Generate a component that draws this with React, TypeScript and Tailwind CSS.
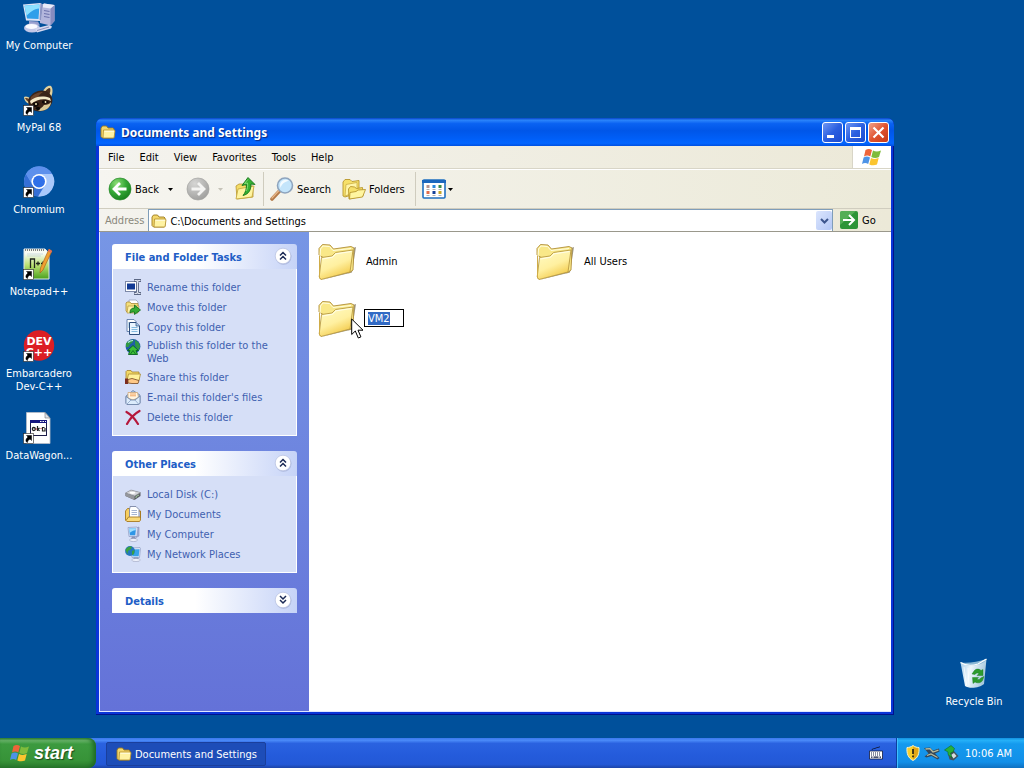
import React, { useEffect, useRef, useState } from 'react';

interface IconProps {
  className?: string;
}

const ShortcutArrow = () => (
  <g>
    <rect x="0.5" y="21.5" width="10" height="10" fill="#fff" stroke="#222" strokeWidth="0.6" />
    <path d="M3.500 23.500h5v5L7 27C5.500 28 4.500 29 4.500 30.500L3 29.500c-.4-2 .4-3 2-4.500z" fill="#000" stroke="#000" strokeWidth="0.500" />
  </g>
);

const ComputerIcon: React.FC<IconProps> = ({ className }) => (
  <svg viewBox="0 0 32 32" className={className}>
    <path d="M17 5l4-3.500L31.500 3v16l-4 4.500L17 21z" fill="#b4b7dd" />
    <path d="M27.500 6.500l4-3.500v16l-4 4.500z" fill="#868cc0" />
    <path d="M17 5l4-3.500L31.500 3l-4 3.500z" fill="#e9ebf9" />
    <path d="M21 8.500l5.500 1M21 11.500l5.500 1M21 14.500l5.500 1" stroke="#6d73ad" strokeWidth="1.100" />
    <path d="M0 2.500L17.500 1 20 3 18 19 3 18.500z" fill="#dfe4f6" />
    <path d="M17.500 1L20 3 18 19l-1.500-1.500z" fill="#8c95c4" />
    <path d="M1.500 3.800L16.500 2.500 15.500 17 4 16.500z" fill="#2f9fea" />
    <path d="M1.500 3.800L16.500 2.500l-.3 4C11 7 7 10 3.500 14z" fill="#8ce0ff" />
    <path d="M6 19l9 .5 2 4H6z" fill="#989fce" />
    <ellipse cx="9" cy="26" rx="8" ry="4.500" fill="#c3c8e8" />
    <ellipse cx="8.500" cy="24.600" rx="6" ry="2.500" fill="#f9faff" />
    <path d="M12 26.500l14-3.500 3 1.500-1 2-14 4z" fill="#d5d9f0" />
    <path d="M14 28.500l12-3.500" stroke="#8187b8" strokeWidth="0.900" />
  </svg>
);

const RaccoonIcon: React.FC<IconProps> = ({ className }) => (
  <svg viewBox="0 0 32 32" className={className}>
    <path d="M20 8c1-4 5-7 8-6 2 2 2 7 0 11z" fill="#e4d29c" />
    <path d="M22 8c1-2 3-4 5-4 1 2 0 5-1 7z" fill="#4a3020" />
    <path d="M8 15C5 12 2 12 1 13c0 3 2 6 6 7z" fill="#e4d29c" />
    <path d="M7 16c-2-2-3-2-5-2 1 2 2 3 4 4z" fill="#6a4328" />
    <path d="M6 14c4-6 10-9 17-7 6 3 8 9 5 14-4 6-12 8-18 5-4-3-6-7-4-12z" fill="#3a2418" />
    <path d="M8 13c4-4 9-5 12-5-3 2-5 4-7 7l-6 4z" fill="#6b452c" />
    <path d="M7 17c4-4 12-6 20-3l1 3c-6-3-14-2-20 3z" fill="#f4e9c8" />
    <path d="M12 25c4 1 7-1 9-4 3 0 6-1 7-3 0 5-5 9-11 9z" fill="#dccb98" />
    <path d="M10 19c3-2 5-1 6 1-1 3-4 4-6 2zM19 17c3-1 6 0 7 1-2 2-5 2-7 1z" fill="#120a08" />
    <circle cx="13" cy="20" r="1" fill="#f5e9b8" />
    <circle cx="22.500" cy="18" r="0.900" fill="#f5e9b8" />
    <ellipse cx="15" cy="24.500" rx="2.200" ry="1.700" fill="#090707" />
    <ShortcutArrow />
  </svg>
);

const ChromiumIcon: React.FC<IconProps> = ({ className }) => (
  <svg viewBox="0 0 32 32" className={className}>
    <circle cx="16" cy="15.500" r="15" fill="#6fa0f0" />
    <path d="M16 8h13.200A15 15 0 0 1 15 30.500L22.500 19z" fill="#a9c8fb" />
    <path d="M3 8a15 15 0 0 0 12 22.500l6-10.500-11.500-1z" fill="#356fd6" />
    <path d="M3 8A15 15 0 0 1 29.200 8H16l-7 9z" fill="#5d90ec" />
    <circle cx="16" cy="15.500" r="7.600" fill="#fff" />
    <circle cx="16" cy="15.500" r="6" fill="#2f6fe8" />
    <ShortcutArrow />
  </svg>
);

const NotepadIcon: React.FC<IconProps> = ({ className }) => (
  <svg viewBox="0 0 32 32" className={className}>
    <defs>
      <linearGradient id="npp" x1="0" y1="0" x2="0" y2="1">
        <stop offset="0.15" stopColor="#f7fbf2" />
        <stop offset="0.550" stopColor="#b9e070" />
        <stop offset="1" stopColor="#49a01c" />
      </linearGradient>
    </defs>
    <path d="M1 1h21l4 4v26H1z" fill="url(#npp)" stroke="#dfe6e8" strokeWidth="1" />
    <path d="M2 2h20" stroke="#5a5a5a" strokeWidth="1.500" strokeDasharray="1 1" />
    <path d="M4 6h16M4 8h14" stroke="#b6cbd4" strokeWidth="0.600" />
    <path d="M7.500 20v-9h4v9M13 15.500h4M15 13.500v4M18 15.500h4M20 13.500v4" stroke="#20261c" strokeWidth="1.300" fill="none" />
    <path d="M26 1l3 2-9 19-3 3 .5-5z" fill="#f0a030" stroke="#a35c17" strokeWidth="0.600" />
    <path d="M26 1l3 2-1 2-3-2z" fill="#e36c62" />
    <ShortcutArrow />
  </svg>
);

const DevIcon: React.FC<IconProps> = ({ className }) => (
  <svg viewBox="0 0 32 32" className={className}>
    <circle cx="16" cy="15.500" r="15.200" fill="#dc1e24" />
    <text x="16" y="15" textAnchor="middle" fontSize="11" fontWeight="700" fontFamily="DejaVu Sans" fill="#fff">DEV</text>
    <text x="16" y="26" textAnchor="middle" fontSize="11" fontWeight="700" fontFamily="DejaVu Sans" fill="#fff">C++</text>
    <ShortcutArrow />
  </svg>
);

const BatchIcon: React.FC<IconProps> = ({ className }) => (
  <svg viewBox="0 0 32 32" className={className}>
    <path d="M3.500.5H22l5 5.500v25.500H3.500z" fill="#fff" stroke="#b9bec8" strokeWidth="0.800" />
    <path d="M22 .5V6h5z" fill="#dfe3ea" stroke="#777" strokeWidth="0.600" />
    <rect x="7.500" y="8.500" width="16" height="15" fill="#fff" stroke="#1c1c48" />
    <path d="M7 8h17v3H7z" fill="#15157f" />
    <path d="M17 9.500h1.500M19.500 9.500H21M22 9.500h1" stroke="#fff" />
    <circle cx="10.800" cy="17" r="1.500" fill="none" stroke="#222" strokeWidth="1.300" />
    <path d="M14.500 14v5M14.500 17.500l2-1.500M15 17l1.500 2M21.500 15.500h-2v3.500h2.500v-3" stroke="#222" strokeWidth="1.200" fill="none" />
    <path d="M12.500 17h1.500M17.500 16.500h1" stroke="#b23" />
    <ShortcutArrow />
  </svg>
);

const RecycleIcon: React.FC<IconProps> = ({ className }) => (
  <svg viewBox="0 0 32 32" className={className}>
    <defs>
      <linearGradient id="bin" x1="0" y1="0" x2="1" y2="0.300">
        <stop offset="0" stopColor="#a6cdea" />
        <stop offset="0.450" stopColor="#eef7fc" />
        <stop offset="1" stopColor="#a8c9de" />
      </linearGradient>
    </defs>
    <path d="M2.500 4.500C8 6 15 6 20 4.500L28.500 1 26 26c-4 4-15 5-19 2z" fill="url(#bin)" />
    <path d="M2.500 4.500C10 5.500 20 4 28.500 1c-2 4-7 6-13 6.500S5 7 2.500 4.500z" fill="#8ab8d6" />
    <path d="M2.500 4.500C8 8 15 7.500 20 6L28.500 1" fill="none" stroke="#fff" strokeWidth="1.200" />
    <path d="M6 9l2.500 18M10 10l1 18" stroke="#fff" strokeWidth="1" opacity="0.700" />
    <path d="M14 16l2-3c2-2.500 5-2.500 7-.500l2-1v6h-6l2-2c-1.500-1-3-.500-4 1zM26 18.500l-1.500 4c-1.500 2.500-5 3-7.500 1.500l-2 1.500-.5-6h6l-1.500 1.800c1.500.700 3 .200 3.700-1.300z" fill="#2c9a2d" stroke="#15781c" strokeWidth="0.400" />
  </svg>
);

const SmallFolder: React.FC<IconProps> = ({ className }) => (
  <svg viewBox="0 0 16 16" className={className}>
    <path d="M1 4L2.500 2h4L8 4h5l1 1v8l-1 1H2.500L1 12.500z" fill="#f3d76c" stroke="#9d7a1d" strokeWidth="0.900" />
    <path d="M3.500 6h11l.500 1-1 7H3z" fill="#fff3a3" stroke="#b28e2c" strokeWidth="0.800" />
    <path d="M4.500 7.300h9.500" stroke="#fffce0" strokeWidth="1" />
  </svg>
);

const BigFolder: React.FC<IconProps> = ({ className }) => (
  <svg viewBox="0 0 38 38" className={className}>
    <defs>
      <linearGradient id="bigFolder" x1="0" y1="0" x2="0.500" y2="1">
        <stop offset="0" stopColor="#fffcc8" />
        <stop offset="0.600" stopColor="#fff0a0" />
        <stop offset="1" stopColor="#f3cb4c" />
      </linearGradient>
    </defs>
    <path d="M3 37l31-7.500 4-25.500-3 1-3 23z" fill="#6d6247" opacity="0.650" />
    <path d="M1 12V5.500L4.500 1.500 12 2l3.500 4L33 3.500l3 1.500-1 22-4 3z" fill="#f9e888" stroke="#b08d38" strokeWidth="0.900" />
    <path d="M2 14l.5-8L5 3l6.500.500 3.500 4L33 5.500" fill="none" stroke="#fffde0" strokeWidth="1" />
    <path d="M3.500 14.500L14 13l3.500-3.500L35 7l-3 22L3 36.500 1.200 34z" fill="url(#bigFolder)" stroke="#b99b43" strokeWidth="0.900" />
    <path d="M1.500 13v22l1.500 1.500" stroke="#cfac48" strokeWidth="1" fill="none" />
    <path d="M4.500 16L14.500 14.200 18 10.800 33.500 8.500" stroke="#fffef0" strokeWidth="0.900" fill="none" />
  </svg>
);

const WindowsFlag: React.FC<IconProps> = ({ className }) => (
  <svg viewBox="0 0 20 18" className={className}>
    <path d="M3.500 2C6 .6 8 .8 10 2L8.300 8.500C6.300 7.300 4.300 7.200 2 8.500z" fill="#ee6439" />
    <path d="M11 2.600c2.500 1.200 5 1.200 8 0L17 9c-2.600 1.200-5 1.200-7.700 0z" fill="#7fbc3c" />
    <path d="M1.600 9.500c2.400-1.300 4.400-1.200 6.400 0L6.200 16C4.200 14.800 2.200 14.700 0 16z" fill="#4d93e6" />
    <path d="M9 10c2.600 1.200 5 1.200 7.700.1L15 16.500c-2.600 1.100-5 1.100-7.700-.1z" fill="#fbc52f" />
  </svg>
);

const BackIcon: React.FC<IconProps & { forward?: boolean }> = ({ className, forward }) => (
  <svg viewBox="0 0 24 24" className={className}>
    <defs>
      <radialGradient id="goBack" cx="0.350" cy="0.250" r="0.850">
        <stop offset="0" stopColor="#8ede77" />
        <stop offset="0.500" stopColor="#35a836" />
        <stop offset="1" stopColor="#147a1b" />
      </radialGradient>
      <radialGradient id="goForward" cx="0.350" cy="0.250" r="0.850">
        <stop offset="0" stopColor="#d6d6d4" />
        <stop offset="1" stopColor="#9b9b99" />
      </radialGradient>
    </defs>
    <circle cx="12" cy="12" r="11" fill={forward ? 'url(#goForward)' : 'url(#goBack)'} stroke={forward ? '#a5a5a2' : '#2a8a2c'} strokeWidth="0.700" />
    <path
      d={forward ? 'M5.500 12h12M12 6l6 6-6 6' : 'M18.500 12h-12M12 6l-6 6 6 6'}
      stroke={forward ? '#f4f4f2' : '#fff'}
      strokeWidth="2.800"
      fill="none"
    />
  </svg>
);

const UpIcon: React.FC<IconProps> = ({ className }) => (
  <svg viewBox="0 0 24 24" className={className}>
    <path d="M2 9l3-2h5l2 2h7v11L3 22z" fill="#f4dc66" stroke="#b7962f" strokeWidth="0.800" />
    <path d="M4 12l16-3-2 11-16 2z" fill="#fff4a0" stroke="#c3a43c" strokeWidth="0.800" />
    <path d="M14 .500l7 7-4-.5C17 13 15 17 9 18.500c2.500-3 3.500-6 3.500-11L8 8.500z" fill="#36b032" stroke="#16761b" strokeWidth="0.900" />
    <path d="M14 2.500l-3.500 4 3-.5c.500 3 0 6-1.500 8" fill="none" stroke="#8be07a" strokeWidth="0.900" />
  </svg>
);

const SearchIcon: React.FC<IconProps> = ({ className }) => (
  <svg viewBox="0 0 24 24" className={className}>
    <path d="M9.500 14L2 22" stroke="#b47a49" strokeWidth="3.600" strokeLinecap="round" />
    <path d="M9 13.500l-7 7.500" stroke="#e8b98c" strokeWidth="1.200" strokeLinecap="round" />
    <circle cx="15" cy="8.500" r="7.500" fill="#c4e5fb" stroke="#8ea4bd" strokeWidth="1.600" />
    <path d="M10 8a5.500 5.500 0 0 1 9-4C16 4 12 6 10.500 11z" fill="#f4fbff" />
  </svg>
);

const FoldersIcon: React.FC<IconProps> = ({ className }) => (
  <svg viewBox="0 0 24 24" className={className}>
    <path d="M1 5l2-2.500h5l2 2 7-1v12L3 20l-2-1z" fill="#f6e06a" stroke="#b8962c" strokeWidth="0.900" />
    <path d="M4 7.500l11-2v9L3 19z" fill="#fff5a8" stroke="#c5a63c" strokeWidth="0.700" />
    <path d="M6.500 12l2-2.500 4 .5 2 1.500 6-1 .5 8.500L7 22z" fill="#f6e06a" stroke="#b8962c" strokeWidth="0.900" />
    <path d="M8 15.500l6-1 2-1.500 7.500-.5-3 7.500-13 2z" fill="#fff5a0" stroke="#b8962c" strokeWidth="0.900" />
  </svg>
);

const ViewsIcon: React.FC<IconProps> = ({ className }) => (
  <svg viewBox="0 0 24 20" className={className}>
    <rect x="1" y="1" width="22" height="18" rx="1" fill="#fff" stroke="#1e6fc0" strokeWidth="1.600" />
    <path d="M0 1h24v3H0z" fill="#1c67bd" />
    <path d="M4.500 6h3v3h-3z" fill="#b7948f" />
    <path d="M10.500 6h3v3h-3z" fill="#2b87dc" />
    <path d="M16.500 6h3v3h-3z" fill="#3b8a48" />
    <path d="M4.500 12h3v3h-3z" fill="#e26d4b" />
    <path d="M10.500 12h3v3h-3z" fill="#14409a" />
    <path d="M16.500 12h3v3h-3z" fill="#c4a629" />
    <path d="M4.500 10.500h3M10.500 10.500h3M16.500 10.500h3M4.500 16.500h3M10.500 16.500h3M16.500 16.500h3" stroke="#999" strokeWidth="0.800" />
  </svg>
);

const Caret: React.FC<IconProps> = ({ className }) => (
  <svg viewBox="0 0 5 3" className={className}>
    <path d="M0 0h5L2.500 3z" fill="currentColor" />
  </svg>
);

const RenameIcon: React.FC<IconProps> = ({ className }) => (
  <svg viewBox="0 0 16 16" className={className}>
    <rect x="0.500" y="2.500" width="11" height="10" fill="#fff" stroke="#7d89a8" />
    <path d="M2 4.500h8v6H2z" fill="#123a94" />
    <path d="M9 1.500h2.500l1 1 1-1H16M12.500 2.500v11M9 14.500h2.500l1-1 1 1H16" fill="none" stroke="#5b6784" strokeWidth="3" />
    <path d="M9.500 1.500h2l1 1 1-1h2M12.500 2.500v11M9.500 14.500h2l1-1 1 1h2" fill="none" stroke="#dfe4f0" strokeWidth="1.200" />
  </svg>
);

const MoveIcon: React.FC<IconProps> = ({ className }) => (
  <svg viewBox="0 0 16 16" className={className}>
    <path d="M4 1h7l2 2v5H4z" fill="#fff" stroke="#8d98b0" strokeWidth="0.700" />
    <path d="M1 4l1-1h3l1 1.500h7V13H2l-1-1z" fill="#f4df7b" stroke="#a8893a" strokeWidth="0.800" />
    <path d="M3 7h11l-1 7H2z" fill="#fff1a4" stroke="#b3923c" strokeWidth="0.700" />
    <path d="M5 14c0-3 1-5 4.500-5V6l6 5-6 4.500V13c-2 0-3.500 0-4.500 1z" fill="#36ab33" stroke="#0d681a" strokeWidth="0.800" />
  </svg>
);

const CopyIcon: React.FC<IconProps> = ({ className }) => (
  <svg viewBox="0 0 16 16" className={className}>
    <path d="M2 .5h7l2 2v10H2z" fill="#fff" stroke="#5e7ba8" strokeWidth="0.900" />
    <path d="M4.500 3.500H11l3.500 3.500v8.500h-10z" fill="#eaf5ff" stroke="#2c4d7c" strokeWidth="1" />
    <path d="M11 3.500V7h3.500" fill="#a7c8e8" stroke="#2c4d7c" strokeWidth="0.700" />
    <path d="M6.500 8.500h6M6.500 10.500h6M6.500 12.500h6M3 4h1M3 6h1M3 8h1" stroke="#6aabd8" strokeWidth="0.800" />
  </svg>
);

const PublishIcon: React.FC<IconProps> = ({ className }) => (
  <svg viewBox="0 0 16 16" className={className}>
    <circle cx="8" cy="7.500" r="7.400" fill="#205ea8" />
    <path d="M1 4.500C3 1 7 0 9 1L7 4 5 5 3.500 8 1 8zM10 1l3.500 2.500 1.700 4-2 4-3-5z" fill="#2f9a42" />
    <path d="M3 3.500c2-2 4-2 5-2" stroke="#b9e8f2" strokeWidth="1.200" fill="none" />
    <path d="M8 6.500l5.500 5H11l1.500 4h-9l1.500-4H2.500z" fill="#3fc039" stroke="#0a6420" strokeWidth="0.900" />
    <path d="M5.500 15L8 11.500l2.500 3.500" stroke="#0a6420" strokeWidth="0.800" fill="none" />
  </svg>
);

const ShareIcon: React.FC<IconProps> = ({ className }) => (
  <svg viewBox="0 0 16 16" className={className}>
    <path d="M1 2.500l1-1h4l1 1.500h7v8H1z" fill="#f3d966" stroke="#a2802d" strokeWidth="0.800" />
    <path d="M3.500 5h12l-1.500 6.500H2z" fill="#fff19a" stroke="#a98a34" strokeWidth="0.800" />
    <path d="M0 9.500h3V15H0z" fill="#7d2d20" />
    <path d="M3 10.500l4-1 7 2-1 3H7l-4-.500z" fill="#ffc987" stroke="#76481f" strokeWidth="0.800" />
  </svg>
);

const MailIcon: React.FC<IconProps> = ({ className }) => (
  <svg viewBox="0 0 16 16" className={className}>
    <path d="M1 7l7-5.500L15 6v8l-2 1.500H2L1 14z" fill="#a9c5e6" stroke="#6b80a5" strokeWidth="0.800" />
    <path d="M3 3.500h9.500l1 5L8 11 3 9z" fill="#fff5e2" stroke="#cda06a" strokeWidth="0.700" />
    <path d="M5 5h6M5 6.800h6" stroke="#f29d54" strokeWidth="0.900" />
    <path d="M1 7.500l5 3.500h4l5-4v7.500L13 15.500H2l-1-1z" fill="#dcecfc" stroke="#6b80a5" strokeWidth="0.800" />
    <path d="M2 15l4-4M13.500 15L10 11" stroke="#7f98bf" strokeWidth="0.700" />
  </svg>
);

const DeleteIcon: React.FC<IconProps> = ({ className }) => (
  <svg viewBox="0 0 16 16" className={className}>
    <path d="M1.500 3C6 5.500 10 10 13 15M14.500 2C9 5 5 9.500 2 15" stroke="#b5173b" strokeWidth="2.200" strokeLinecap="round" fill="none" />
  </svg>
);

const DiskIcon: React.FC<IconProps> = ({ className }) => (
  <svg viewBox="0 0 16 16" className={className}>
    <path d="M.5 7L6 4l9.500 2.500V10l-6 4L.5 10z" fill="#5b5d63" />
    <path d="M.5 7L6 4l9.500 2.500-6 3.500z" fill="#d4d5d9" stroke="#8b8c93" strokeWidth="0.500" />
    <path d="M.5 7l9 3v4L.5 10z" fill="#94969c" />
    <ellipse cx="7.500" cy="6.800" rx="3" ry="1.100" fill="#fff" />
    <path d="M11 12v-1.500l3-1.500" stroke="#a9d3a4" strokeWidth="0.900" fill="none" />
  </svg>
);

const DocumentsIcon: React.FC<IconProps> = ({ className }) => (
  <svg viewBox="0 0 16 16" className={className}>
    <path d="M.5 5l2-2.500h4V12l-2 3h-3l-1-1z" fill="#f6cf62" stroke="#a77a21" strokeWidth="0.900" />
    <path d="M5 1.500V.5h6L14 3.500V12H4.500V3z" fill="#fff" stroke="#7a86a5" strokeWidth="0.900" />
    <path d="M6.500 4.500h5.500M6.500 6.500h5.500M6.500 8.500h5.500" stroke="#8fa2c8" strokeWidth="0.800" />
    <path d="M1 14.500L3.500 11h12v3l-1 1.500H2z" fill="#f9d978" stroke="#a77a21" strokeWidth="0.900" />
    <path d="M14 5h1.500v7" stroke="#a77a21" strokeWidth="1" fill="none" />
  </svg>
);

const MiniComputerIcon: React.FC<IconProps> = ({ className }) => (
  <svg viewBox="0 0 16 16" className={className}>
    <path d="M11 2l3-1v9l-3 1.500z" fill="#aab2d4" stroke="#8087ad" strokeWidth="0.500" />
    <path d="M3 1.500L11.500 1l1.500 1-1 8.500H4z" fill="#d5dcf2" stroke="#8292bd" strokeWidth="0.600" />
    <path d="M4 2.500l7-.3-.8 7H5z" fill="#2f96e6" />
    <path d="M4 2.500l7-.3-.3 2C8 4.500 6 5.500 4.700 7z" fill="#9fdeff" />
    <path d="M7 10.500h3l1 2.500H6z" fill="#8a93b6" />
    <ellipse cx="8.500" cy="14" rx="4" ry="1.600" fill="#eceffa" stroke="#8d94b3" strokeWidth="0.500" />
  </svg>
);

const NetworkIcon: React.FC<IconProps> = ({ className }) => (
  <svg viewBox="0 0 16 16" className={className}>
    <path d="M5 2L15 1.500l.5 1-1 9H7z" fill="#dce3f5" stroke="#8796bd" strokeWidth="0.600" />
    <path d="M6 3.500l8.500-.3-.8 7H7.500z" fill="#37a3ea" />
    <circle cx="5" cy="5" r="4.900" fill="#2577bd" />
    <path d="M.5 4C2.500.5 6 0 7 1L5.500 3.500 3 5 2.500 8zM7 5l2.500-1-.5 4-2 1z" fill="#3aa23f" />
    <path d="M9 11.500h4l.5 1.500H8.500z" fill="#848eb1" />
    <ellipse cx="11" cy="14" rx="4.300" ry="1.600" fill="#edf0fb" stroke="#8d94b3" strokeWidth="0.500" />
  </svg>
);

const Chevrons: React.FC<{ down?: boolean }> = ({ down }) => (
  <svg viewBox="0 0 18 18" className="size-[18px]">
    <circle cx="9.500" cy="9.800" r="8" fill="#8f9cc8" opacity="0.500" />
    <circle cx="9" cy="9" r="7.800" fill="#fff" stroke="#b4bfdf" strokeWidth="0.700" />
    <path
      d={down ? 'M6 5l3 3 3-3M6 9l3 3 3-3' : 'M6 8.500l3-3 3 3M6 12.500l3-3 3 3'}
      stroke="#1b2a55"
      strokeWidth="1.500"
      fill="none"
    />
  </svg>
);

const desktopIcons = [
  { label: 'My Computer', Icon: ComputerIcon },
  { label: 'MyPal 68', Icon: RaccoonIcon },
  { label: 'Chromium', Icon: ChromiumIcon },
  { label: 'Notepad++', Icon: NotepadIcon },
  { label: 'Embarcadero Dev-C++', Icon: DevIcon },
  { label: 'DataWagon...', Icon: BatchIcon },
];

const folderTasks = [
  { label: 'Rename this folder', Icon: RenameIcon },
  { label: 'Move this folder', Icon: MoveIcon },
  { label: 'Copy this folder', Icon: CopyIcon },
  { label: 'Publish this folder to the Web', Icon: PublishIcon },
  { label: 'Share this folder', Icon: ShareIcon },
  { label: "E-mail this folder's files", Icon: MailIcon },
  { label: 'Delete this folder', Icon: DeleteIcon },
];

const otherPlaces = [
  { label: 'Local Disk (C:)', Icon: DiskIcon },
  { label: 'My Documents', Icon: DocumentsIcon },
  { label: 'My Computer', Icon: MiniComputerIcon },
  { label: 'My Network Places', Icon: NetworkIcon },
];

const menus = ['File', 'Edit', 'View', 'Favorites', 'Tools', 'Help'];

interface PanelProps {
  title: string;
  items?: { label: string; Icon: React.FC<IconProps> }[];
}

const Panel: React.FC<PanelProps> = ({ title, items }) => (
  <section>
    <button
      type="button"
      aria-expanded={!!items}
      className="flex h-[25px] w-full items-center justify-between rounded-t-[3px] bg-linear-to-r from-white from-45% to-[#c6d3f7] pr-[5px] pb-[2px] pl-[13px] text-left font-bold text-[#215dc6]"
    >
      <span className="pt-1">{title}</span>
      <Chevrons down={!items} />
    </button>
    {items && (
      <ul className="flex flex-col gap-1 border border-t-0 border-white bg-[#d6dff7] px-3 py-[10px]">
        {items.map(({ label, Icon }) => (
          <li key={label}>
            <a href="#" className="flex items-center gap-[6px] text-[#415fb0]">
              <Icon className="size-4 shrink-0 self-start" />
              <span className="max-w-[125px]">{label}</span>
            </a>
          </li>
        ))}
      </ul>
    )}
  </section>
);

const TitleButtons = () => (
  <div className="flex gap-[2px]">
    <button type="button" aria-label="Minimize" className="size-[21px] rounded-[3px] border border-white bg-linear-to-br from-[#6f96f3] via-[#2b5fe0] to-[#1c4bd0]">
      <svg viewBox="0 0 19 19"><path d="M4 12h7v3H4z" fill="#fff" /></svg>
    </button>
    <button type="button" aria-label="Maximize" className="size-[21px] rounded-[3px] border border-white bg-linear-to-br from-[#6f96f3] via-[#2b5fe0] to-[#1c4bd0]">
      <svg viewBox="0 0 19 19"><path d="M4 4h11v11H4zM5 7v7h9V7z" fill="#fff" fillRule="evenodd" /></svg>
    </button>
    <button type="button" aria-label="Close" className="size-[21px] rounded-[3px] border border-white bg-linear-to-br from-[#f0a088] via-[#e0532f] to-[#c63a17]">
      <svg viewBox="0 0 19 19"><path d="M4.500 4.500l10 10M14.500 4.500l-10 10" stroke="#fff" strokeWidth="2.200" /></svg>
    </button>
  </div>
);

const Toolbar = () => (
  <div className="flex h-10 shrink-0 items-center border-t border-white border-b border-b-[#d0cdbf] bg-linear-to-r from-[#f6f5f0] to-[#ecead9] pl-[9px]">
    <button type="button" className="flex items-center gap-[3px]">
      <BackIcon className="size-6" />
      Back
    </button>
    <button type="button" aria-label="Back history" className="ml-[9px]"><Caret className="h-[3px] w-[5px]" /></button>
    <button type="button" aria-label="Forward" disabled className="ml-[13px]"><BackIcon forward className="size-6" /></button>
    <button type="button" aria-label="Forward history" disabled className="ml-[8px] text-[#c5c3b8]"><Caret className="h-[3px] w-[5px]" /></button>
    <button type="button" aria-label="Up" className="ml-[11px]"><UpIcon className="size-6" /></button>
    <div className="ml-[5px] h-[34px] w-px bg-[#cfccbe]" />
    <button type="button" className="ml-[6px] flex items-center gap-[3px]">
      <SearchIcon className="size-6" />
      Search
    </button>
    <button type="button" className="ml-[11px] flex items-center gap-[3px]">
      <FoldersIcon className="size-6" />
      Folders
    </button>
    <div className="ml-[10px] h-[34px] w-px bg-[#cfccbe]" />
    <button type="button" aria-label="Views" className="ml-[6px] flex items-center gap-[2px]">
      <ViewsIcon className="h-5 w-6" />
      <Caret className="h-[3px] w-[5px]" />
    </button>
  </div>
);

const AddressBar = () => (
  <div className="flex h-[23px] shrink-0 items-center border-b border-[#9a988c] bg-linear-to-r from-[#f4f3ee] to-[#ece9d8] pl-[6px]">
    <label htmlFor="address" className="text-[#8a887c]">Address</label>
    <div className="ml-1 flex h-full flex-1 items-center border border-b-0 border-[#7f9db9] bg-white pl-[2px]">
      <SmallFolder className="size-4" />
      <input id="address" defaultValue="C:\Documents and Settings" className="h-5 min-w-0 flex-1 pt-px pl-[3px] outline-none" />
      <button type="button" aria-label="Show addresses" className="flex h-[19px] w-4 items-center justify-center rounded-[2px] bg-linear-to-br from-[#dbe5fd] to-[#b3c7f5]">
        <svg viewBox="0 0 9 6" className="h-[6px] w-[9px]"><path d="M1 1l3.500 3.500L8 1" stroke="#3c558c" strokeWidth="2" fill="none" /></svg>
      </button>
    </div>
    <button type="button" className="flex w-[58px] items-center gap-1 pl-[7px]">
      <svg viewBox="0 0 18 18" className="size-[18px]">
        <rect width="18" height="18" rx="2" fill="#2d9437" />
        <path d="M0 2a2 2 0 0 1 2-2h14L0 14z" fill="#6fc06a" opacity="0.600" />
        <path d="M3 9h11M9 4l5 5-5 5" stroke="#fff" strokeWidth="2" fill="none" />
      </svg>
      Go
    </button>
  </div>
);

const FileList = () => {
  const [name, setName] = useState('VM2');
  const nameRef = useRef<HTMLInputElement>(null);

  useEffect(() => {
    nameRef.current?.focus();
    nameRef.current?.select();
  }, []);

  return (
    <main className="grid flex-1 auto-rows-[57px] grid-cols-[repeat(2,218px)] content-start bg-white pt-[11px] pl-[9px]">
      <div className="flex items-start gap-[10px]">
        <BigFolder className="size-[38px]" />
        <span className="pt-[12px]">Admin</span>
      </div>
      <div className="flex items-start gap-[10px]">
        <BigFolder className="size-[38px]" />
        <span className="pt-[12px]">All Users</span>
      </div>
      <div className="relative flex items-start gap-2">
        <BigFolder className="size-[38px]" />
        <input
          ref={nameRef}
          aria-label="Folder name"
          value={name}
          onChange={(e) => setName(e.target.value)}
          className="mt-[9px] h-[18px] w-10 border border-black bg-white px-[3px] outline-none selection:bg-[#316ac5] selection:text-white"
        />
        <svg viewBox="0 0 13 21" className="absolute top-[18px] left-[33px] h-[21px] w-[13px]">
          <path d="M.7 1v15.500L4.300 13l3 7 2.600-1.100L7 12.200h5z" fill="#fff" stroke="#000" strokeWidth="1" />
        </svg>
      </div>
    </main>
  );
};

const ExplorerWindow = () => (
  <div className="absolute top-[118px] right-[130px] bottom-[23px] left-[96px] flex flex-col overflow-hidden rounded-t-[7px] bg-[#0a35d8] px-[3px] pb-[3px] shadow-[inset_-1px_-1px_0_#00138c,inset_1px_0_0_#0831d9]">
    <header className="-mx-[3px] flex h-7 shrink-0 items-center justify-between bg-[linear-gradient(to_bottom,#0845c8_0%,#2a84fb_8%,#0a62f2_20%,#0056e8_45%,#005ff8_75%,#0366ff_90%,#0050e0_100%)] pr-[5px] pl-1">
      <div className="flex items-center gap-[5px]">
        <SmallFolder className="size-4" />
        <h1 className="font-['Noto_Sans',sans-serif] text-[12px] font-bold text-white [text-shadow:1px_1px_1px_#0a2a80]">Documents and Settings</h1>
      </div>
      <TitleButtons />
    </header>
    <nav className="flex h-[23px] shrink-0 items-center justify-between border-b border-[#d8d5c7] bg-linear-to-r from-[#f4f3ee] to-[#ece9d8] pl-[9px]">
      <div className="flex gap-[15px]">
        {menus.map((menu) => (
          <button key={menu} type="button">{menu}</button>
        ))}
      </div>
      <div className="flex h-full w-[39px] items-center justify-center border-l border-[#d8d5c7] bg-white">
        <WindowsFlag className="h-[18px] w-5" />
      </div>
    </nav>
    <Toolbar />
    <AddressBar />
    <div className="flex min-h-0 flex-1 border-b border-l border-[#dfe8ff]">
      <aside className="flex w-[209px] shrink-0 flex-col gap-[15px] bg-linear-to-b from-[#7796e5] to-[#6472d8] px-3 pt-3">
        <Panel title="File and Folder Tasks" items={folderTasks} />
        <Panel title="Other Places" items={otherPlaces} />
        <Panel title="Details" />
      </aside>
      <FileList />
    </div>
  </div>
);

const Taskbar = () => (
  <footer className="flex h-[30px] shrink-0 bg-[linear-gradient(to_bottom,#3a78ee_0%,#4a8af8_8%,#2a62e0_18%,#245bdb_60%,#2358d6_88%,#1c44a8_100%)] text-white">
    <button
      type="button"
      className="flex w-24 items-center gap-1 rounded-r-[8px] bg-[linear-gradient(to_bottom,#3a8f3a_0%,#6bb56b_8%,#3c9a3f_20%,#379338_75%,#2a7a2c_100%)] pl-[10px] font-['Liberation_Sans',sans-serif] text-[18px] font-bold italic shadow-[inset_-3px_0_4px_#1e6a25] [text-shadow:1px_1px_1px_#1d4a1d]"
    >
      <WindowsFlag className="h-[18px] w-5" />
      start
    </button>
    <button type="button" className="mt-1 ml-[10px] flex h-6 w-40 items-center gap-[3px] rounded-[2px] border border-[#1a3f9c] bg-[#1d4db8] pl-[9px]">
      <SmallFolder className="size-4" />
      Documents and Settings
    </button>
    <div className="ml-auto flex items-center pr-[13px]">
      <svg viewBox="0 0 14 14" className="size-[14px]">
        <path d="M3 4c0-2 3-1 4-2s3 0 4-1.500" stroke="#111c40" strokeWidth="0.900" fill="none" />
        <path d="M.5 5h13v8H.5z" fill="#fff" stroke="#111c40" strokeWidth="0.800" />
        <path d="M2 7h10M2 9h10" stroke="#111c40" strokeWidth="1.200" strokeDasharray="1 1" />
        <path d="M2 11.200h1.500M4.500 11.200h5M10.500 11.200H12" stroke="#111c40" strokeWidth="1.200" />
      </svg>
    </div>
    <div className="flex w-32 items-center gap-[3px] border-l border-[#0d3f9e] bg-[linear-gradient(to_bottom,#1290e0_0%,#25b0f8_8%,#149aee_20%,#128fe8_80%,#0f70c0_100%)] pl-2 shadow-[inset_1px_0_0_#3fc0ff]">
      <svg viewBox="0 0 16 16" className="size-4">
        <path d="M8 .5c2 1.500 4 2 6 2 .5 6-1 10.500-6 13-5-2.500-6.500-7-6-13 2 0 4-.5 6-2z" fill="#f9ce2a" stroke="#f7f0c8" strokeWidth="1" />
        <path d="M8 1.500c1.500 1 3.500 1.700 5.300 1.800.3 5-1 9-5.300 11.200z" fill="#e2a616" />
        <path d="M7.200 4h1.600v5H7.200zM7.200 10.500h1.600v1.700H7.200z" fill="#1c1a10" />
      </svg>
      <svg viewBox="0 0 16 16" className="size-4">
        <path d="M0 3l6-.500 3 3 6-2 .5 3-4.500 2 4.500 4.500-2 1.500-6-3.500-5 1.500-2-1 4-3z" fill="#33475a" />
        <path d="M1.500 4l4.500-.3 3 3.300 5.500-1.800M3 10.500l4-1.500 6.500 3.500" stroke="#b9bd9c" strokeWidth="1.300" fill="none" />
      </svg>
      <svg viewBox="0 0 16 16" className="size-4">
        <path d="M5 9l5.500-3.500L15.500 11l-5 4.500-4-1z" fill="#41535f" />
        <path d="M8 10l3-2 2.500 3-3 2.500z" fill="#d6dde0" />
        <path d="M1.500 5l6.500-4.500 3.500 3L10 7l-2.500 1 1.500 5-4-3.500L5 7z" fill="#28b03a" stroke="#0c6c28" strokeWidth="0.600" />
      </svg>
      <time className="ml-[3px]">10:06 AM</time>
    </div>
  </footer>
);

const App: React.FC = () => (
  <div className="flex h-screen flex-col overflow-hidden bg-[#00509b] font-['DejaVu_Sans_Condensed','DejaVu_Sans',sans-serif] text-[11px] leading-[13px] text-black">
    <div className="relative flex-1">
      <div className="grid w-[78px] auto-rows-[82px] pt-[2px]">
        {desktopIcons.map(({ label, Icon }) => (
          <button key={label} type="button" className="flex flex-col items-center gap-[5px] text-white">
            <Icon className="size-8" />
            <span>{label}</span>
          </button>
        ))}
      </div>
      <button type="button" className="absolute right-[11px] bottom-[30px] flex w-[78px] flex-col items-center gap-[5px] text-white">
        <RecycleIcon className="size-8" />
        <span>Recycle Bin</span>
      </button>
      <ExplorerWindow />
    </div>
    <Taskbar />
  </div>
);

export default App;
